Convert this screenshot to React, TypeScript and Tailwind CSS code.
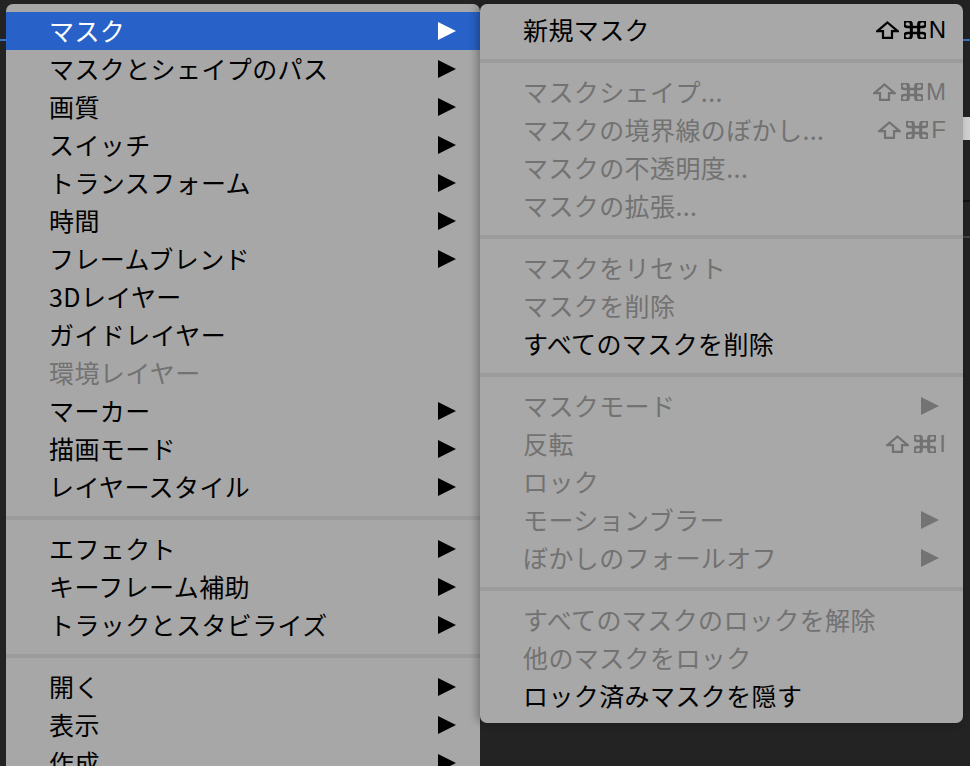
import React from 'react';

type Row = { label: string; arrow?: boolean; disabled?: boolean; active?: boolean; shortcut?: string };
type Item = Row | 'sep';

const mainItems: Item[] = [
  { label: 'マスク', arrow: true, active: true },
  { label: 'マスクとシェイプのパス', arrow: true },
  { label: '画質', arrow: true },
  { label: 'スイッチ', arrow: true },
  { label: 'トランスフォーム', arrow: true },
  { label: '時間', arrow: true },
  { label: 'フレームブレンド', arrow: true },
  { label: '3Dレイヤー' },
  { label: 'ガイドレイヤー' },
  { label: '環境レイヤー', disabled: true },
  { label: 'マーカー', arrow: true },
  { label: '描画モード', arrow: true },
  { label: 'レイヤースタイル', arrow: true },
  'sep',
  { label: 'エフェクト', arrow: true },
  { label: 'キーフレーム補助', arrow: true },
  { label: 'トラックとスタビライズ', arrow: true },
  'sep',
  { label: '開く', arrow: true },
  { label: '表示', arrow: true },
  { label: '作成', arrow: true },
];

const subItems: Item[] = [
  { label: '新規マスク', shortcut: 'N' },
  'sep',
  { label: 'マスクシェイプ...', shortcut: 'M', disabled: true },
  { label: 'マスクの境界線のぼかし...', shortcut: 'F', disabled: true },
  { label: 'マスクの不透明度...', disabled: true },
  { label: 'マスクの拡張...', disabled: true },
  'sep',
  { label: 'マスクをリセット', disabled: true },
  { label: 'マスクを削除', disabled: true },
  { label: 'すべてのマスクを削除' },
  'sep',
  { label: 'マスクモード', arrow: true, disabled: true },
  { label: '反転', shortcut: 'I', disabled: true },
  { label: 'ロック', disabled: true },
  { label: 'モーションブラー', arrow: true, disabled: true },
  { label: 'ぼかしのフォールオフ', arrow: true, disabled: true },
  'sep',
  { label: 'すべてのマスクのロックを解除', disabled: true },
  { label: '他のマスクをロック', disabled: true },
  { label: 'ロック済みマスクを隠す' },
];

function Arrow({ color }: { color: string }) {
  return (
    <svg width="18" height="18" viewBox="0 0 18 18" className="shrink-0">
      <polygon points="0,0 18,9 0,18" fill={color} />
    </svg>
  );
}

// ⇧ and ⌘ drawn to match the macOS menu glyphs
function ShiftGlyph({ color }: { color: string }) {
  return (
    <svg width="23" height="18" viewBox="0 0 23 18" className="shrink-0">
      <path d="M11.5 1.5 L21.6 10.1 H16 V16.8 H7 V10.1 H1.4 Z" fill="none" stroke={color} strokeWidth="2.2" strokeLinejoin="miter" />
    </svg>
  );
}

function CmdGlyph({ color }: { color: string }) {
  return (
    <svg width="22" height="18" viewBox="3 3 18 18" preserveAspectRatio="none" className="shrink-0">
      <path
        d="M15 6v12a3 3 0 1 0 3-3H6a3 3 0 1 0 3 3V6a3 3 0 1 0-3 3h12a3 3 0 1 0-3-3"
        fill="none"
        stroke={color}
        strokeWidth="2.5"
        strokeLinecap="round"
        strokeLinejoin="round"
      />
    </svg>
  );
}

function Separator() {
  return (
    <div className="h-[24px] flex items-center">
      <div className="h-[4px] w-full bg-[#9b9b9b]" />
    </div>
  );
}

function MainRow({ item }: { item: Row }) {
  const color = item.active ? 'text-white' : item.disabled ? 'text-[#727272]' : 'text-black';
  return (
    <div className={`h-[38px] flex items-center pl-[43px] pr-[24px] ${item.active ? 'bg-[#2862c8]' : ''} ${color}`}>
      <span className="flex-1 whitespace-nowrap">{item.label}</span>
      {item.arrow && <Arrow color={item.active ? '#ffffff' : '#000000'} />}
    </div>
  );
}

function SubRow({ item }: { item: Row }) {
  const c = item.disabled ? '#727272' : '#000000';
  return (
    <div
      className={`h-[38px] flex items-center pl-[43px] ${item.arrow ? 'pr-[24px]' : 'pr-[17px]'} ${
        item.disabled ? 'text-[#727272]' : 'text-black'
      }`}
    >
      <span className="flex-1 whitespace-nowrap">{item.label}</span>
      {item.shortcut && (
        <div className="flex items-center">
          <ShiftGlyph color={c} />
          <div className="ml-[5px]">
            <CmdGlyph color={c} />
          </div>
          <span className="ml-[3px] text-[24px] leading-none tracking-normal font-['Liberation_Sans',sans-serif]">
            {item.shortcut}
          </span>
        </div>
      )}
      {item.arrow && <Arrow color="#737373" />}
    </div>
  );
}

export default function App() {
  return (
    <div className="relative w-[970px] h-[766px] overflow-hidden bg-[#232323] text-[25px] tracking-[0.4px] font-['Noto_Sans_CJK_JP','Noto_Sans',sans-serif]">
      {/* pieces of the app window behind the menus */}
      <div className="absolute left-0 top-[39px] w-full h-[2px] bg-[#3b73c9]" />
      <div className="absolute left-[963px] top-[117px] w-[7px] h-[23px] bg-[#cfcfcf]" />
      <div className="absolute left-[963px] top-[200px] w-[7px] h-[2px] bg-[#111]" />
      <div className="absolute left-[963px] top-[236px] w-[7px] h-[2px] bg-[#444]" />

      {/* layer context menu */}
      <div className="absolute left-[6px] top-[4px] w-[474px] h-[800px] rounded-[7px] bg-[#a7a7a7] pt-[8px]">
        {mainItems.map((it, i) => (it === 'sep' ? <Separator key={i} /> : <MainRow key={i} item={it} />))}
      </div>

      {/* mask submenu */}
      <div className="absolute left-[480px] top-[4px] w-[483px] rounded-[7px] bg-[#a8a8a8] pt-[7px] pb-[8px] shadow-[-3px_0_8px_rgba(0,0,0,0.3)]">
        {subItems.map((it, i) => (it === 'sep' ? <Separator key={i} /> : <SubRow key={i} item={it} />))}
      </div>
    </div>
  );
}
